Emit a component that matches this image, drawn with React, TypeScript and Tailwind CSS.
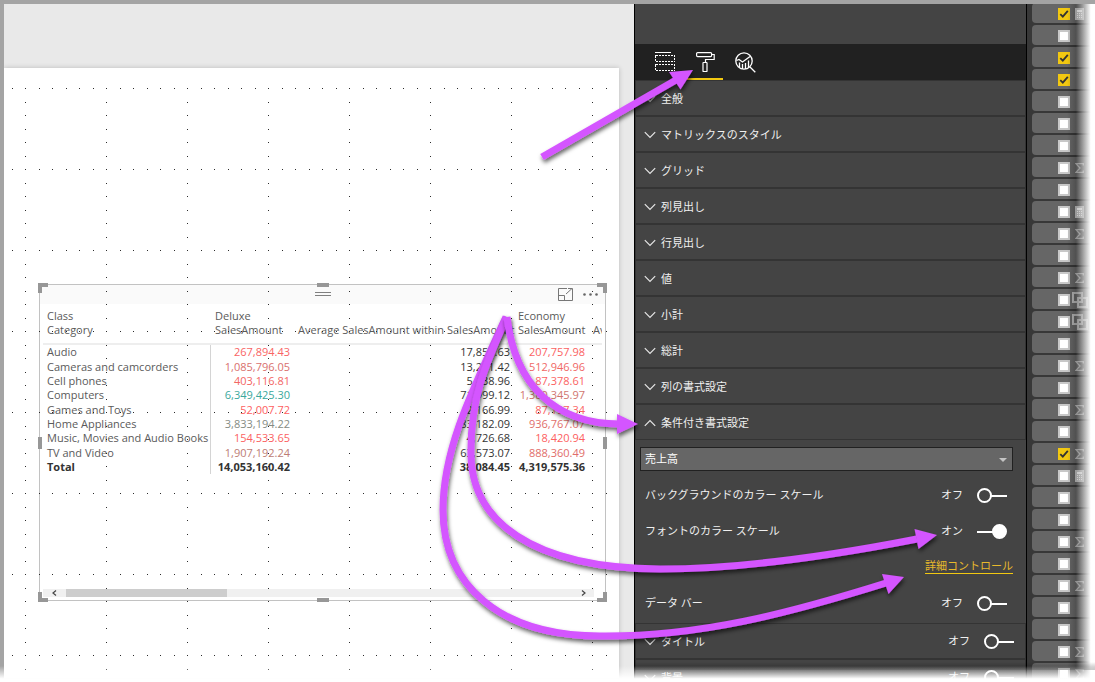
import React, { useState } from "react";

type Kind = "" | "calc" | "sum" | "group";
const fields: { checked?: boolean; kind: Kind }[] = [
  { checked: true, kind: "calc" }, { kind: "" }, { checked: true, kind: "" }, { checked: true, kind: "" },
  { kind: "" }, { kind: "" }, { kind: "" }, { kind: "sum" }, { kind: "" }, { kind: "calc" },
  { kind: "sum" }, { kind: "" }, { kind: "sum" }, { kind: "group" }, { kind: "group" }, { kind: "" },
  { kind: "sum" }, { kind: "" }, { kind: "sum" }, { kind: "" }, { checked: true, kind: "sum" }, { kind: "calc" },
  { kind: "" }, { kind: "" }, { kind: "sum" }, { kind: "" }, { kind: "sum" }, { kind: "" },
  { kind: "" }, { kind: "sum" }, { kind: "sum" },
];

const rows = [
  { name: "Audio", deluxe: "267,894.43", dc: "text-[#f96464]", avg: "17,859.63", eco: "207,757.98", ec: "text-[#fb6262]" },
  { name: "Cameras and camcorders", deluxe: "1,085,796.05", dc: "text-[#d9706e]", avg: "13,271.42", eco: "512,946.96", ec: "text-[#f06866]" },
  { name: "Cell phones", deluxe: "403,116.81", dc: "text-[#f36664]", avg: "5,138.96", eco: "87,378.61", ec: "text-[#fb6262]" },
  { name: "Computers", deluxe: "6,349,425.30", dc: "text-[#3aa89c]", avg: "71,999.12", eco: "1,380,345.97", ec: "text-[#d0746e]" },
  { name: "Games and Toys", deluxe: "52,007.72", dc: "text-[#fd6060]", avg: "2,166.99", eco: "87,197.34", ec: "text-[#fb6262]" },
  { name: "Home Appliances", deluxe: "3,833,194.22", dc: "text-[#858c84]", avg: "83,182.09", eco: "936,767.07", ec: "text-[#df6e6b]" },
  { name: "Music, Movies and Audio Books", deluxe: "154,533.65", dc: "text-[#fb6262]", avg: "4,726.68", eco: "18,420.94", ec: "text-[#fd6060]" },
  { name: "TV and Video", deluxe: "1,907,192.24", dc: "text-[#bd7c74]", avg: "63,573.07", eco: "888,360.49", ec: "text-[#e16d6a]" },
];

const sections = ["全般", "マトリックスのスタイル", "グリッド", "列見出し", "行見出し", "値", "小計", "総計", "列の書式設定"];

const offsets = [14, 27, 41, 54, 68];

function DotGrid() {
  return (
    <svg className="pointer-events-none absolute inset-x-2 top-5 bottom-0 z-10 h-[590px] w-[595px]" aria-hidden="true">
      <defs>
        <pattern id="dots" x="13" y="0" width="81" height="81" patternUnits="userSpaceOnUse">
          <g fill="#2b2b2b" shapeRendering="crispEdges">
            <rect x="0" y="0" width="1" height="1" />
            {offsets.map((o) => (
              <React.Fragment key={o}>
                <rect x={o} y="0" width="1" height="1" />
                <rect x="0" y={o} width="1" height="1" />
              </React.Fragment>
            ))}
          </g>
        </pattern>
      </defs>
      <rect width="100%" height="100%" fill="url(#dots)" />
    </svg>
  );
}

function Handles() {
  return (
    <div className="pointer-events-none" aria-hidden="true">
      <i className="absolute -top-0.5 -left-0.5 z-20 size-2.5 border-t-4 border-l-4 border-[#979797]" />
      <i className="absolute -top-0.5 -right-0.5 z-20 size-2.5 border-t-4 border-r-4 border-[#979797]" />
      <i className="absolute -bottom-0.5 -left-0.5 z-20 size-2.5 border-b-4 border-l-4 border-[#979797]" />
      <i className="absolute -right-0.5 -bottom-0.5 z-20 size-2.5 border-r-4 border-b-4 border-[#979797]" />
      <i className="absolute inset-x-0 -top-0.5 z-20 mx-auto h-1 w-3 bg-[#979797]" />
      <i className="absolute inset-x-0 -bottom-0.5 z-20 mx-auto h-1 w-3 bg-[#979797]" />
      <i className="absolute inset-y-0 -left-0.5 z-20 my-auto h-3 w-1 bg-[#979797]" />
      <i className="absolute inset-y-0 -right-0.5 z-20 my-auto h-3 w-1 bg-[#979797]" />
    </div>
  );
}

function Matrix() {
  return (
    <table className="w-[586px] table-fixed border-separate border-spacing-0 text-left text-[11px] leading-[14px] whitespace-nowrap text-[#5a5a5a] [&_td]:px-1 [&_td]:py-0 [&_td]:text-right [&_td]:align-top [&_th]:px-1 [&_th]:py-0 [&_th]:align-top [&_th]:font-normal">
      <colgroup>
        <col className="w-[168px]" />
        <col className="w-[83px]" />
        <col className="w-[220px]" />
        <col className="w-[75px]" />
        <col className="w-10" />
      </colgroup>
      <thead>
        <tr className="h-3.5">
          <th>Class</th>
          <th>Deluxe</th>
          <th />
          <th>Economy</th>
          <th />
        </tr>
        <tr className="h-[22px] [&>th]:border-b-2 [&>th]:border-[#eeeeee]">
          <th>Category</th>
          <th>SalesAmount</th>
          <th>Average SalesAmount within SalesAmount</th>
          <th>SalesAmount</th>
          <th>Average</th>
        </tr>
      </thead>
      <tbody className="[&>tr]:h-3.5 [&>tr:nth-child(3n+1)]:h-[15px]">
        {rows.map((r) => (
          <tr key={r.name}>
            <th scope="row" className="border-r border-[#d4d4d4]">{r.name}</th>
            <td className={r.dc}>{r.deluxe}</td>
            <td className="text-[#333333]">{r.avg}</td>
            <td className={r.ec}>{r.eco}</td>
            <td />
          </tr>
        ))}
        <tr className="text-[#333333]">
          <th scope="row" className="border-r border-[#d4d4d4]"><b>Total</b></th>
          <td><b>14,053,160.42</b></td>
          <td><b>38,084.45</b></td>
          <td><b>4,319,575.36</b></td>
          <td />
        </tr>
      </tbody>
    </table>
  );
}

function Visual() {
  return (
    <section aria-label="Matrix" className="relative mt-[216px] mr-[13px] ml-[35px] flex h-[317px] flex-col border border-[#c2c2c2]">
      <Handles />
      <header className="relative z-10 flex h-[19px] shrink-0 items-center justify-end gap-2.5 bg-[#fafafa] pr-[7px]">
        <span className="absolute inset-x-0 top-[7px] mx-auto h-1 w-4 border-y border-[#808080]" />
        <button aria-label="Focus mode">
          <svg width="15" height="13" viewBox="0 0 15 13" fill="none" stroke="#777" className="block">
            <path d="M9 .5H.5v12h14V5M.5 7.500h6v5M8 6l6-5.500M10 .5h4.500V5" />
          </svg>
        </button>
        <button aria-label="More options">
          <svg width="15" height="3" viewBox="0 0 15 3" fill="#666" className="block">
            <circle cx="1.500" cy="1.500" r="1.300" />
            <circle cx="7.500" cy="1.500" r="1.300" />
            <circle cx="13.500" cy="1.500" r="1.300" />
          </svg>
        </button>
      </header>
      <div className="mx-[3px] mt-[5px] overflow-hidden">
        <Matrix />
      </div>
      <div className="mt-auto mr-[11px] mb-[3px] ml-[3px] flex h-2 items-center bg-[#f0f0f0]">
        <svg width="23" height="8" viewBox="0 0 23 8" fill="none" stroke="#444" strokeWidth="1.200">
          <path d="M13 1.500 10 4l3 2.500" />
        </svg>
        <span className="h-2 w-[161px] bg-[#cdcdcd]" />
        <svg width="14" height="8" viewBox="0 0 14 8" fill="none" stroke="#444" strokeWidth="1.200" className="ml-auto">
          <path d="M2 1.500 5 4 2 6.500" />
        </svg>
      </div>
    </section>
  );
}

function Chevron({ up }: { up?: boolean }) {
  return (
    <svg width="12" height="8" viewBox="0 0 12 8" fill="none" stroke="#e6e6e6" strokeWidth="1.200" aria-hidden="true">
      <path d={up ? "M.8 6.800 6 1.500l5.200 5.300" : "M.8 1.200 6 6.500l5.200-5.300"} />
    </svg>
  );
}

function Switch({ on: initial, label }: { on?: boolean; label: string }) {
  const [on, setOn] = useState(!!initial);
  return (
    <label className="relative flex items-center gap-3.5">
      <span>{on ? "オン" : "オフ"}</span>
      <input
        type="checkbox"
        role="switch"
        aria-label={label}
        checked={on}
        onChange={() => setOn(!on)}
        className="absolute right-0 h-4 w-[30px] appearance-none"
      />
      <svg width="30" height="16" viewBox="0 0 30 16" stroke="#fff" strokeWidth="2" aria-hidden="true" className="pointer-events-none mt-0.5">
        {on ? (
          <>
            <path d="M0 8h16" />
            <circle cx="22.500" cy="7.500" r="6.500" fill="#fff" />
          </>
        ) : (
          <>
            <path d="M14 8h16" />
            <circle cx="7.500" cy="7.500" r="6.500" fill="none" />
          </>
        )}
      </svg>
    </label>
  );
}

function Section({ title, open, toggle }: { title: string; open?: boolean; toggle?: boolean }) {
  return (
    <div className="flex h-9 items-center border border-[#343434] pr-[11px]">
      <button aria-expanded={!!open} className="flex h-full flex-1 items-center gap-[5px] pt-0.5 pl-2 text-left">
        <Chevron up={open} />
        {title}
      </button>
      {toggle && <Switch label={title} />}
    </div>
  );
}

function Option({ label, on }: { label: string; on?: boolean }) {
  return (
    <div className="flex h-9 items-center justify-between pr-[19px] pl-2.5">
      <span>{label}</span>
      <Switch on={on} label={label} />
    </div>
  );
}

function FormatPane() {
  return (
    <aside className="w-[393px] shrink-0 border-x border-black bg-[#444444] text-[11px] leading-4 text-[#f0f0f0]">
      <div className="h-10" />
      <nav className="flex h-9 gap-1 bg-[#212121] pl-3">
        <button aria-label="Fields" className="flex w-9 items-center justify-center">
          <svg width="20" height="20" viewBox="0 0 20 20" fill="none" stroke="#fff" shapeRendering="crispEdges">
            <path d="M0 .5h16" />
            <path strokeDasharray="2 1" d="M.5 3.500h19v6H.5zM.5 12.500h19v6H.5z" />
          </svg>
        </button>
        <button aria-label="Format" className="flex w-9 items-center justify-center border-b-2 border-[#f2c811] pt-0.5">
          <svg width="19" height="20" viewBox="0 0 19 20" fill="none" stroke="#fff" strokeWidth="1.200">
            <rect x=".6" y=".6" width="15" height="4" rx="1" />
            <path d="M15.600 2.500h2.600v5H9.500v3" />
            <rect x="7" y="10.500" width="4" height="9" rx=".5" />
          </svg>
        </button>
        <button aria-label="Analytics" className="flex w-9 items-center justify-center">
          <svg width="21" height="21" viewBox="0 0 21 21" fill="none" stroke="#fff" strokeWidth="1.300">
            <circle cx="9" cy="9" r="8.200" />
            <path d="m15 15 5.300 5.300M1.500 8.500l2.500-1 3.500 2.500 7.500-5.500" />
            <path d="M4.500 10.500v4.500M7.500 12v5M10.500 11v6M13.500 8.500V15" />
          </svg>
        </button>
      </nav>
      {sections.map((s) => (
        <Section key={s} title={s} />
      ))}
      <Section title="条件付き書式設定" open />
      <div className="pt-[7px] pb-0.5">
        <div className="relative mr-[13px] ml-[5px]">
          <select aria-label="条件付き書式設定" className="block h-6 w-full appearance-none border border-[#212121] bg-[#666666] px-1 text-white">
            <option>売上高</option>
          </select>
          <svg width="8" height="4" viewBox="0 0 8 4" fill="#c4c4c4" className="pointer-events-none absolute top-[11px] right-1.5">
            <path d="M0 0h8L4 4z" />
          </svg>
        </div>
        <div className="pt-1.5">
          <Option label="バックグラウンドのカラー スケール" />
          <Option label="フォントのカラー スケール" on />
          <div className="flex h-9 items-center justify-end pr-[13px] pb-0.5">
            <a href="#details" className="border-b border-[#f2c811] leading-[14px] text-[#e8b92c]">詳細コントロール</a>
          </div>
          <Option label="データ バー" />
        </div>
      </div>
      <Section title="タイトル" toggle />
      <Section title="背景" toggle />
    </aside>
  );
}

function FieldIcon({ kind }: { kind: Kind }) {
  if (kind === "calc")
    return (
      <svg width="9" height="12" viewBox="0 0 9 12" className="ml-[5px]" shapeRendering="crispEdges">
        <rect width="9" height="12" fill="#c2c2c2" />
        <path d="M2 2.500h5" stroke="#fff" strokeWidth="2" />
        <path d="M2 5.500h5M2 7.500h5M2 9.500h5" stroke="#fff" strokeDasharray="1 1" />
      </svg>
    );
  if (kind === "sum")
    return (
      <svg width="9" height="10" viewBox="0 0 9 10" fill="none" stroke="#b4b4b4" strokeWidth="1.300" className="ml-[5px]">
        <path d="M8.300 2.600V.7H1L5 5 1 9.300h7.300V7.400" />
      </svg>
    );
  if (kind === "group")
    return (
      <svg width="16" height="16" viewBox="0 0 16 16" fill="none" stroke="#b4b4b4" strokeWidth="2" className="ml-0.5">
        <path d="M1 1h9v9H1zM6 6h9v9H6z" />
      </svg>
    );
  return null;
}

function FieldRow({ checked, kind, index }: { checked?: boolean; kind: Kind; index: number }) {
  const [on, setOn] = useState(!!checked);
  return (
    <li className="flex h-5 shrink-0 items-center rounded-l bg-[#666666] pt-0.5 pl-[26px]">
      <span className="relative size-3 shrink-0">
        <input
          type="checkbox"
          aria-label={`Field ${index + 1}`}
          checked={on}
          onChange={() => setOn(!on)}
          className="block size-3 appearance-none border-2 border-[#c8c8c8] bg-white checked:border-[#f2c811] checked:bg-[#f2c811]"
        />
        {on && (
          <svg width="12" height="12" viewBox="0 0 12 12" fill="none" stroke="#333" strokeWidth="1.800" className="pointer-events-none absolute inset-0">
            <path d="m2.300 6.200 2.500 2.500 5-5.800" />
          </svg>
        )}
      </span>
      <FieldIcon kind={kind} />
    </li>
  );
}

function Arrows() {
  return (
    <svg className="pointer-events-none absolute top-0 left-0 z-40 h-[682px] w-[1095px]" viewBox="0 0 1095 682" aria-hidden="true">
      <defs>
        <filter id="shade" x="-10%" y="-10%" width="120%" height="125%">
          <feDropShadow dx="1" dy="3" stdDeviation="2" floodColor="#000" floodOpacity=".6" />
        </filter>
      </defs>
      {[
        ["M506 317C470 395 443 450 443 510C443 585 500 636 600 636C700 637 790 613 886 583", "M904 577 882 574 888.500 594z"],
        ["M507 317C485 365 470 400 471 455C472 520 530 568 660 569C740 569 830 556 917 539", "M937 535 914.500 529 918.500 549z"],
        ["M507 317C515 385 555 424 620 424", "M638 424 617 414 617 434z"],
        ["M542 157 676 80", "M693 70 669 72 680.500 89.500z"],
      ].map(([line, head]) => (
        <g key={line} filter="url(#shade)">
          <path d={line} fill="none" stroke="#d455ff" strokeWidth="7" />
          <path d={head} fill="#d455ff" />
        </g>
      ))}
    </svg>
  );
}

export default function App() {
  return (
    <div className="relative h-screen overflow-hidden bg-white font-['Open_Sans','Noto_Sans_CJK_JP',sans-serif]">
      <div className="flex h-full overflow-hidden border-t-4 border-l-4 border-[#a4a4a4]">
        <main className="flex min-w-0 flex-1 flex-col bg-[#e9e9e9] pt-16 pr-[15px] pb-1">
          <div className="relative flex-1 bg-white shadow-[0_0_5px_rgba(0,0,0,0.2)]">
            <Visual />
            <DotGrid />
          </div>
        </main>
        <FormatPane />
        <ul className="-mt-px flex w-[68px] shrink-0 flex-col gap-0.5 overflow-hidden bg-[#383838] pl-[5px]">
          {fields.map((f, i) => (
            <FieldRow key={i} index={i} {...f} />
          ))}
        </ul>
      </div>
      <Arrows />
      <div className="pointer-events-none absolute top-1 right-0 bottom-0 z-50 w-7 bg-linear-to-r from-transparent via-black/20 via-30% to-white to-85%" />
      <div className="pointer-events-none absolute right-0 bottom-3 z-50 h-2 w-[461px] bg-linear-to-b from-transparent to-black/30" />
      <div className="pointer-events-none absolute inset-x-0 bottom-0 z-50 h-4 bg-linear-to-b from-transparent to-white to-80%" />
    </div>
  );
}
